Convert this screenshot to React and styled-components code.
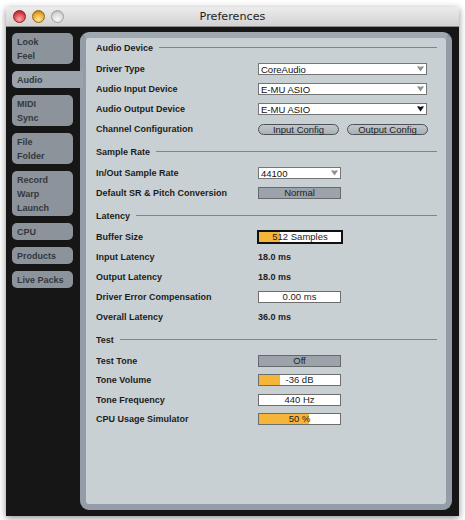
import React from "react";
import styled, { createGlobalStyle } from "styled-components";

const tabs = [
  { id: "look", lines: ["Look", "Feel"] },
  { id: "audio", lines: ["Audio"], active: true },
  { id: "midi", lines: ["MIDI", "Sync"] },
  { id: "file", lines: ["File", "Folder"] },
  { id: "record", lines: ["Record", "Warp", "Launch"] },
  { id: "cpu", lines: ["CPU"] },
  { id: "products", lines: ["Products"] },
  { id: "packs", lines: ["Live Packs"] },
];

const Arrow = ({ dark }) => (
  <svg width="7" height="6" viewBox="0 0 7 6">
    <path d="M0 0.5 Q1.8 -0.2 3.5 1 Q5.2 -0.2 7 0.5 L3.5 5.5 Z" fill={dark ? "#111" : "#8e9092"} />
  </svg>
);

const App = () => {
  return (
    <Page>
      <GlobalStyle />
      <Window>
        <TitleBar>
          <Lights>
            <Light color="red" />
            <Light color="yellow" />
            <Light color="grey" />
          </Lights>
          <Title>Preferences</Title>
          <span />
        </TitleBar>

        <Body>
          <Sidebar>
            {tabs.map((t) => (
              <Tab key={t.id} active={t.active} lines={t.lines.length}>
                {t.lines.map((l) => (
                  <div key={l}>{l}</div>
                ))}
              </Tab>
            ))}
          </Sidebar>

          <Panel>
            <Section first>
              <Header>Audio Device</Header>
              <Row>
                <Label>Driver Type</Label>
                <Select width={169}>
                  CoreAudio <Arrow />
                </Select>
              </Row>
              <Row>
                <Label>Audio Input Device</Label>
                <Select width={169}>
                  E-MU ASIO <Arrow />
                </Select>
              </Row>
              <Row>
                <Label>Audio Output Device</Label>
                <Select width={169}>
                  E-MU ASIO <Arrow dark />
                </Select>
              </Row>
              <Row>
                <Label>Channel Configuration</Label>
                <Pills>
                  <Pill>Input Config</Pill>
                  <Pill>Output Config</Pill>
                </Pills>
              </Row>
            </Section>

            <Section>
              <Header>Sample Rate</Header>
              <Row>
                <Label>In/Out Sample Rate</Label>
                <Select width={83}>
                  44100 <Arrow />
                </Select>
              </Row>
              <Row>
                <Label>Default SR &amp; Pitch Conversion</Label>
                <Toggle>Normal</Toggle>
              </Row>
            </Section>

            <Section>
              <Header>Latency</Header>
              <Row>
                <Label>Buffer Size</Label>
                <Field fill={26} focused>
                  512 Samples
                </Field>
              </Row>
              <Row>
                <Label>Input Latency</Label>
                <Value>18.0 ms</Value>
              </Row>
              <Row>
                <Label>Output Latency</Label>
                <Value>18.0 ms</Value>
              </Row>
              <Row>
                <Label>Driver Error Compensation</Label>
                <Field>0.00 ms</Field>
              </Row>
              <Row>
                <Label>Overall Latency</Label>
                <Value>36.0 ms</Value>
              </Row>
            </Section>

            <Section>
              <Header>Test</Header>
              <Row h={19.5}>
                <Label>Test Tone</Label>
                <Toggle>Off</Toggle>
              </Row>
              <Row h={19.5}>
                <Label>Tone Volume</Label>
                <Field fill={26}>-36 dB</Field>
              </Row>
              <Row h={19.5}>
                <Label>Tone Frequency</Label>
                <Field>440 Hz</Field>
              </Row>
              <Row h={19.5}>
                <Label>CPU Usage Simulator</Label>
                <Field fill={62}>50 %</Field>
              </Row>
            </Section>
          </Panel>
        </Body>
      </Window>
    </Page>
  );
};

export default App;

// Styled Components
const GlobalStyle = createGlobalStyle`
  html, body {
    margin: 0;
    background: #ffffff;
  }
  body {
    font-family: "Liberation Sans", Arial, sans-serif;
  }
`;

const Page = styled.div`
  padding: 7px 0 0 6px;
  height: 520px;
  box-sizing: border-box;
`;

const Window = styled.div`
  width: 453px;
  height: 509px;
  display: flex;
  flex-direction: column;
  box-shadow: 0 2px 7px rgba(0, 0, 0, 0.45);
`;

const TitleBar = styled.div`
  height: 20px;
  flex-shrink: 0;
  display: grid;
  grid-template-columns: 1fr auto 1fr;
  align-items: center;
  background: linear-gradient(#ececec, #d2d2d2);
  border-bottom: 1px solid #8c8c8c;
  box-sizing: border-box;
`;

const Lights = styled.div`
  display: flex;
  gap: 6px;
  padding-left: 7px;
`;

const lightColors = {
  red: ["#f7a6a6", "#d8414a", "#8c1e24"],
  yellow: ["#fde7a0", "#eaa630", "#9a6410"],
  grey: ["#f7f7f7", "#d8d8d8", "#a0a0a0"],
};

const Light = styled.div`
  width: 13px;
  height: 13px;
  border-radius: 50%;
  box-sizing: border-box;
  border: 1px solid ${({ color }) => lightColors[color][2]};
  background: radial-gradient(
    circle at 50% 75%,
    ${({ color }) => lightColors[color][0]} 0%,
    ${({ color }) => lightColors[color][1]} 60%,
    ${({ color }) => lightColors[color][2]} 100%
  );
`;

const Title = styled.div`
  font-family: "DejaVu Sans", sans-serif;
  font-size: 11.2px;
  color: #1e1e1e;
  padding-bottom: 1px;
`;

const Body = styled.div`
  flex: 1;
  display: flex;
  background: #161616;
  padding: 5px 7px 6px 6px;
`;

const Sidebar = styled.div`
  width: 68px;
  flex-shrink: 0;
  display: flex;
  flex-direction: column;
  gap: 7px;
  padding-top: 1px;
  position: relative;
  z-index: 1;
`;

const Tab = styled.div`
  width: ${({ active }) => (active ? "71px" : "61px")};
  height: ${({ lines }) => lines * 14 + 3}px;
  box-sizing: border-box;
  padding: 2px 5px 1px;
  border-radius: ${({ active }) => (active ? "5px 0 0 5px" : "5px")};
  background: ${({ active }) => (active ? "#9aa2ab" : "#8c939b")};
  font-size: 9px;
  font-weight: bold;
  line-height: 14px;
  color: #34383c;
`;

const Panel = styled.div`
  flex: 1;
  background: #c9d0d3;
  border: 6px solid #949ca7;
  border-top-color: #a0a8b0;
  border-radius: 9px;
  padding: 0 9px 0 10px;
`;

const Section = styled.div`
  margin-top: ${({ first }) => (first ? "0" : "3px")};
`;

const Header = styled.div`
  height: 19px;
  margin-bottom: 2px;
  display: flex;
  align-items: center;
  font-size: 9px;
  font-weight: bold;
  color: #1c1c1c;

  &::after {
    content: "";
    flex: 1;
    height: 1px;
    margin-left: 6px;
    background: #7f868b;
  }
`;

const Row = styled.div`
  height: ${({ h }) => h || 20}px;
  display: grid;
  grid-template-columns: 162px 1fr;
  align-items: center;
`;

const Label = styled.div`
  font-size: 9px;
  font-weight: bold;
  color: #1c1c1c;
`;

const Value = styled.div`
  font-size: 9px;
  font-weight: bold;
  color: #1c1c1c;
`;

const Select = styled.div`
  width: ${({ width }) => width}px;
  height: 12px;
  box-sizing: border-box;
  display: flex;
  align-items: center;
  justify-content: space-between;
  padding: 0 2px 0 2px;
  background: #ffffff;
  border: 1px solid #767676;
  font-size: 9.5px;
  color: #111;

  svg {
    flex-shrink: 0;
  }
`;

const Pills = styled.div`
  display: flex;
  gap: 8px;
`;

const Pill = styled.div`
  width: 81px;
  height: 11px;
  box-sizing: border-box;
  border: 1px solid #4e5256;
  border-radius: 6px;
  background: linear-gradient(#c0c6ca, #aab1b6);
  font-size: 9.5px;
  line-height: 9px;
  text-align: center;
  color: #222;
`;

const Toggle = styled.div`
  width: 83px;
  height: 12px;
  box-sizing: border-box;
  border: 1px solid #656a6f;
  background: #9ca3aa;
  font-size: 9.5px;
  line-height: 10px;
  text-align: center;
  color: #222;
`;

const Field = styled.div`
  width: ${({ focused }) => (focused ? "86px" : "83px")};
  height: ${({ focused }) => (focused ? "14px" : "12px")};
  margin-left: ${({ focused }) => (focused ? "-1px" : "0")};
  box-sizing: border-box;
  border: ${({ focused }) => (focused ? "2px solid #111" : "1px solid #6d6d6d")};
  background: ${({ fill }) =>
    fill
      ? `linear-gradient(to right, #f5b53b ${fill}%, #ffffff ${fill}%)`
      : "#ffffff"};
  font-size: 9.5px;
  line-height: 10px;
  text-align: center;
  color: #222;
`;
